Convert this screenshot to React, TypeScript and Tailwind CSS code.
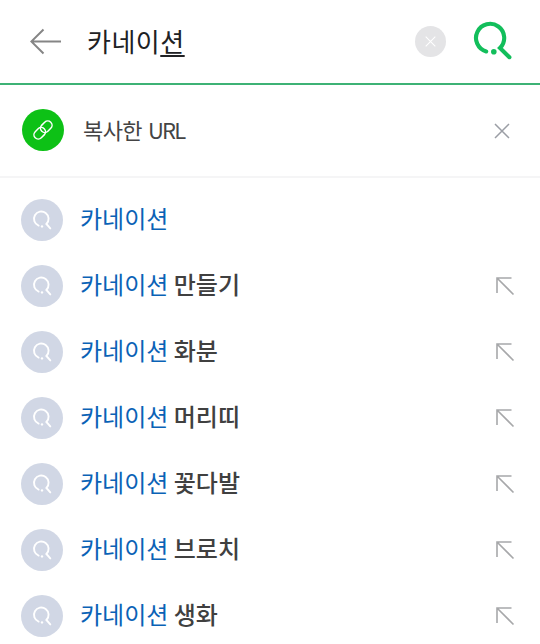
import React from 'react';

interface Suggestion {
  keyword: string;
  rest?: string;
}

const SUGGESTIONS: Suggestion[] = [
  { keyword: '카네이션' },
  { keyword: '카네이션', rest: '만들기' },
  { keyword: '카네이션', rest: '화분' },
  { keyword: '카네이션', rest: '머리띠' },
  { keyword: '카네이션', rest: '꽃다발' },
  { keyword: '카네이션', rest: '브로치' },
  { keyword: '카네이션', rest: '생화' },
];

const BackIcon: React.FC = () => (
  <svg width="32" height="28" viewBox="0 0 32 28" fill="none" stroke="#858585" strokeWidth="2">
    <path d="M13.5 1.5 1.3 13.5 13.5 25.5M1.5 13.5H31" />
  </svg>
);

const SearchIcon: React.FC = () => (
  <svg className="mb-[3px]" width="40" height="40" viewBox="0 0 40 40" fill="none" stroke="#12be5b" strokeWidth="4.1">
    <path d="M14.2 31.5A14.1 14.1 0 1 1 28 28L37.4 37.2" strokeLinecap="round" />
    <circle cx="21.8" cy="31.8" r="2.8" fill="#12be5b" stroke="none" />
  </svg>
);

const LinkIcon: React.FC = () => (
  <svg width="24" height="24" viewBox="0 0 24 24" fill="none" stroke="#fff" strokeWidth="1.5">
    <g transform="rotate(-45 12 12)">
      <rect x="10.3" y="7.7" width="12.7" height="8.6" rx="4.3" />
      <rect x="1" y="7.7" width="12.7" height="8.6" rx="4.3" />
    </g>
  </svg>
);

const CloseIcon: React.FC<{ className: string }> = ({ className }) => (
  <svg className={className} viewBox="0 0 16 16" fill="none" stroke="currentColor" strokeWidth="1.5">
    <path d="M1 1 15 15M15 1 1 15" />
  </svg>
);

const KeywordIcon: React.FC = () => (
  <svg className="shrink-0" width="42" height="42" viewBox="0 0 42 42" fill="none" stroke="#fff">
    <circle cx="21" cy="21" r="21" fill="#d1d7e5" stroke="none" />
    <path d="M17.6 26.6A7.3 7.3 0 1 1 25.4 25L29.3 29.4" strokeWidth="1.9" strokeLinecap="round" />
    <circle cx="21" cy="27.4" r="1.2" fill="#fff" stroke="none" />
  </svg>
);

const FillArrowIcon: React.FC = () => (
  <svg width="19" height="19" viewBox="0 0 19 19" fill="none" stroke="#a7a8aa" strokeWidth="1.6">
    <path d="M1 16V1H15.5M1 1 17.5 17.5" />
  </svg>
);

const SuggestionRow: React.FC<{ item: Suggestion }> = ({ item }) => (
  <li className="flex h-[66px] items-center pl-[21px] pr-[25px]">
    <KeywordIcon />
    <p className="mb-1 ml-[17px] flex-1 text-2xl leading-none text-[#404040]">
      <span className="text-[#0a62b6]">{item.keyword}</span>
      {item.rest && <b className="font-medium"> {item.rest}</b>}
    </p>
    {item.rest && <FillArrowIcon />}
  </li>
);

export default function App() {
  return (
    <div className="h-[644px] w-[540px] overflow-hidden bg-white font-['Noto_Sans_CJK_KR',sans-serif]">
      <header className="flex h-[85px] items-center border-b-2 border-[#3eb275] pl-[30px] pr-7">
        <BackIcon />
        <div className="mb-0.5 ml-[25px] flex-1 text-[26px] leading-none tracking-[0.5px] text-[#202124]">
          카네이<span className="underline decoration-[1.5px] underline-offset-[3px]">션</span>
        </div>
        <button className="mr-[26px] flex size-[31px] items-center justify-center rounded-full bg-[#e4e4e6] text-white">
          <CloseIcon className="size-[11px]" />
        </button>
        <SearchIcon />
      </header>

      <section className="flex h-[93px] items-center border-b-2 border-[#f5f5f6] pl-[22px] pr-[30px]">
        <span className="mb-0.5 flex size-[42px] items-center justify-center rounded-full bg-[#0dc116]">
          <LinkIcon />
        </span>
        <p className="mb-1 ml-[19px] flex-1 text-[22px] leading-none tracking-[-0.6px] text-[#444]">
          복사한<span className="ml-1.5 tracking-[-1.8px]">URL</span>
        </p>
        <CloseIcon className="size-4 text-[#9b9ea5]" />
      </section>

      <ul className="pt-[9px]">
        {SUGGESTIONS.map((item, index) => (
          <SuggestionRow key={index} item={item} />
        ))}
      </ul>
    </div>
  );
}
